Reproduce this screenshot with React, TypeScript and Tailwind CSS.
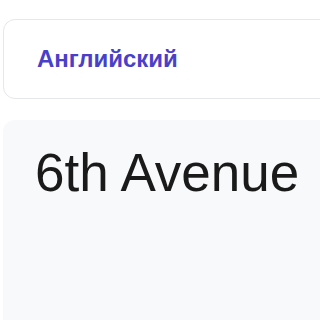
export default function App() {
  return (
    <div className="w-[320px] h-[320px] overflow-hidden bg-white" style={{ fontFamily: '"Liberation Sans", Arial, sans-serif' }}>
      <div className="w-[400px] pl-[3px] pt-[19px] flex flex-col gap-[21px]">
        <div className="h-[80px] rounded-[12px] border border-gray-200 bg-white flex items-center pl-[33px]">
          <span className="text-[24px] font-bold text-[#4a3fc9]">Английский</span>
        </div>
        <div className="h-[300px] rounded-[12px] bg-[#f7f9fb] pl-[32px] pt-[26px]">
          <h1 className="text-[53px] leading-none text-[#1a1a1a]">6th Avenue</h1>
        </div>
      </div>
    </div>
  );
}
